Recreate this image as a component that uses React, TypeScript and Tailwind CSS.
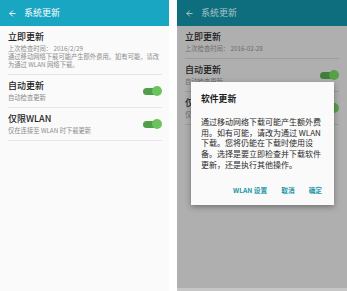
import { ArrowLeft } from "lucide-react";

const font = { fontFamily: '"Noto Sans CJK SC", "Noto Sans", sans-serif' };

function Toggle({ dim }: { dim?: boolean }) {
  return (
    <div className="relative w-[19px] h-[10px] flex items-center shrink-0">
      <div className={`w-[16px] h-[7px] rounded-full ${dim ? "bg-[#3f7f3a]" : "bg-[#4f9f48]"}`} />
      <div className={`absolute right-0 w-[10px] h-[10px] rounded-full ${dim ? "bg-[#57a04a]" : "bg-[#6cc35b]"}`} />
    </div>
  );
}

function Header({ dim }: { dim?: boolean }) {
  return (
    <div className={`h-[26px] flex items-center px-[8px] gap-[7px] shrink-0 ${dim ? "bg-[#0e6e7e]" : "bg-[#19a6c2]"}`}>
      <ArrowLeft size={9} strokeWidth={2.6} className={dim ? "text-[#a9c4c8]" : "text-white"} />
      <span className={`text-[9px] leading-[12px] ${dim ? "text-[#a9c4c8]" : "text-white"}`}>系统更新</span>
    </div>
  );
}

function Row({ title, sub, toggle, dim, last }: { title: string; sub: React.ReactNode; toggle?: boolean; dim?: boolean; last?: boolean }) {
  return (
    <div className={`flex items-center justify-between py-[5px] ${last ? "" : "border-b"} ${dim ? "border-[#9d9d9d]" : "border-[#e6e6e6]"}`}>
      <div className="flex flex-col gap-[2px]">
        <div className={`text-[9px] leading-[12px] font-medium ${dim ? "text-[#1c1c1c]" : "text-[#222222]"}`}>{title}</div>
        <div className={`text-[6.3px] leading-[8px] whitespace-nowrap ${dim ? "text-[#6d6d6d]" : "text-[#8c8c8c]"}`}>{sub}</div>
      </div>
      {toggle && <Toggle dim={dim} />}
    </div>
  );
}

export default function App() {
  return (
    <div className="w-[347px] h-[291px] flex bg-white overflow-hidden" style={font}>
      <div className="w-[169px] flex flex-col bg-[#fafafa]">
        <Header />
        <div className="flex flex-col pl-[8px] pr-[7px]">
          <Row
            title="立即更新"
            sub={
              <>
                上次检查时间：&nbsp;2016/2/29
                <br />
                通过移动网络下载可能产生额外费用。如有可能，请改
                <br />
                为通过 WLAN 网络下载。
              </>
            }
          />
          <Row title="自动更新" sub="自动检查更新" toggle />
          <Row title="仅限WLAN" sub="仅在连接至 WLAN 时下载更新" toggle />
        </div>
      </div>
      <div className="w-[8px]" />
      <div className="w-[170px] relative flex flex-col bg-[#afafaf] border-b-[3px] border-[#c6c6c6]">
        <Header dim />
        <div className="flex flex-col pl-[8px] pr-[8px]">
          <Row dim title="立即更新" sub={<>上次检查时间：&nbsp;2016-02-28</>} />
          <Row dim title="自动更新" sub="自动检查更新" toggle />
          <Row dim title="仅限WLAN" sub="仅在连接至 WLAN 时下载更新" toggle />
        </div>
        <div className="absolute left-[14px] top-[82px] w-[143px] h-[123px] bg-[#fafafa] shadow-[0_2px_6px_rgba(0,0,0,0.35)] flex flex-col pt-[11px] pl-[10px] pr-[12px]">
          <div className="text-[8.8px] leading-[12px] font-bold text-[#1e1e1e]">软件更新</div>
          <div className="mt-[12px] text-[8px] leading-[10.7px] text-[#2a2a2a] whitespace-nowrap">
            通过移动网络下载可能产生额外费
            <br />
            用。如有可能，请改为通过 WLAN
            <br />
            下载。您将仍能在下载时使用设
            <br />
            备。选择是要立即检查并下载软件
            <br />
            更新，还是执行其他操作。
          </div>
          <div className="mt-[15px] flex justify-end gap-[14px] text-[6.7px] leading-[8px] font-bold text-[#2296a8]">
            <span>WLAN 设置</span>
            <span>取消</span>
            <span>确定</span>
          </div>
        </div>
      </div>
    </div>
  );
}
